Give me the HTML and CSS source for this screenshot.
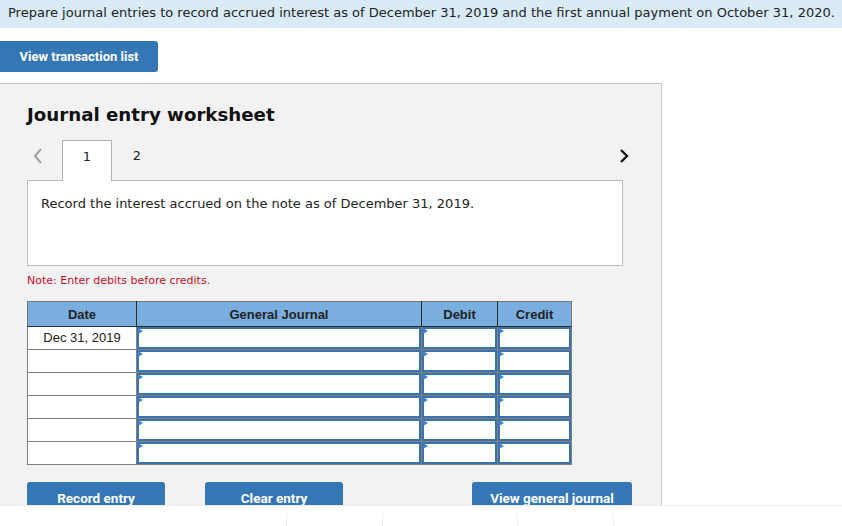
FILE: index.html
```html
<!DOCTYPE html>
<html lang="en">
<head>
    <meta charset="UTF-8">
    <title>Journal entry worksheet</title>
    <link rel="stylesheet" href="styles.css">
</head>
<body>
    <div class="question">Prepare journal entries to record accrued interest as of December 31, 2019 and the first annual payment on October 31, 2020.</div>

    <div class="toolbar">
        <button class="btn btn-top">View transaction list</button>
    </div>

    <div class="worksheet">
        <h2 class="ws-title">Journal entry worksheet</h2>

        <div class="tabs">
            <span class="arrow arrow-prev">
                <svg width="10" height="16" viewBox="0 0 10 16"><polyline points="8,1 2,8 8,15" fill="none" stroke="#a0a0a0" stroke-width="2"/></svg>
            </span>
            <div class="tab active">1</div>
            <div class="tab">2</div>
            <span class="arrow arrow-next">
                <svg width="10" height="16" viewBox="0 0 10 16"><polyline points="2,2 8,8 2,14" fill="none" stroke="#1a1a1a" stroke-width="2.4"/></svg>
            </span>
        </div>

        <div class="task">Record the interest accrued on the note as of December 31, 2019.</div>

        <p class="note">Note: Enter debits before credits.</p>

        <table class="journal">
            <thead>
                <tr>
                    <th class="col-date">Date</th>
                    <th class="col-gj">General Journal</th>
                    <th class="col-amt">Debit</th>
                    <th class="col-amt2">Credit</th>
                </tr>
            </thead>
            <tbody>
                <tr>
                    <td class="date">Dec 31, 2019</td>
                    <td><div class="field"></div></td>
                    <td><div class="field"></div></td>
                    <td><div class="field"></div></td>
                </tr>
                <tr>
                    <td class="date"></td>
                    <td><div class="field"></div></td>
                    <td><div class="field"></div></td>
                    <td><div class="field"></div></td>
                </tr>
                <tr>
                    <td class="date"></td>
                    <td><div class="field"></div></td>
                    <td><div class="field"></div></td>
                    <td><div class="field"></div></td>
                </tr>
                <tr>
                    <td class="date"></td>
                    <td><div class="field"></div></td>
                    <td><div class="field"></div></td>
                    <td><div class="field"></div></td>
                </tr>
                <tr>
                    <td class="date"></td>
                    <td><div class="field"></div></td>
                    <td><div class="field"></div></td>
                    <td><div class="field"></div></td>
                </tr>
                <tr>
                    <td class="date"></td>
                    <td><div class="field"></div></td>
                    <td><div class="field"></div></td>
                    <td><div class="field"></div></td>
                </tr>
            </tbody>
        </table>

        <div class="actions">
            <button class="btn btn-record">Record entry</button>
            <button class="btn btn-clear">Clear entry</button>
            <button class="btn btn-view">View general journal</button>
        </div>
    </div>

    <div class="footer">
        <span class="footer-cell c1"></span>
        <span class="footer-cell c2"></span>
        <span class="footer-cell c3"></span>
        <span class="footer-cell c4"></span>
    </div>
</body>
</html>
```

FILE: styles.css
```css
body {
    margin: 0;
    background: #fff;
    color: #222;
    font-family: "DejaVu Sans", Verdana, sans-serif;
    overflow: hidden;
}
.question {
    background-color: #d9ebf7;
    height: 28px;
    line-height: 26px;
    padding-left: 8px;
    font-size: 13px;
    white-space: nowrap;
}
.toolbar {
    margin-top: 13px;
}
.btn {
    border: none;
    border-radius: 3px;
    background-color: #3577b5;
    color: #fff;
    font-family: Roboto, "Liberation Sans", sans-serif;
    font-weight: 700;
    font-size: 13px;
    cursor: pointer;
}
.btn-top {
    width: 158px;
    height: 31px;
    border-radius: 0 3px 3px 0;
}
.worksheet {
    box-sizing: border-box;
    margin-top: 11px;
    width: 662px;
    height: 422px;
    overflow: hidden;
    background-color: #f2f2f2;
    border-top: 1px solid #c6c6c6;
    border-right: 1px solid #c6c6c6;
    padding: 19px 0 0 27px;
}
.ws-title {
    margin: 0;
    font-size: 18.2px;
    line-height: 24px;
    font-weight: 700;
    color: #111;
}
.tabs {
    display: flex;
    align-items: stretch;
    width: 595px;
    height: 40px;
    margin-top: 13px;
}
.arrow {
    display: flex;
    align-items: center;
    padding-bottom: 8px;
}
.arrow-prev {
    margin-left: 6px;
    margin-right: 19px;
}
.arrow-next {
    margin-left: auto;
    margin-right: -7px;
}
.tab {
    width: 50px;
    text-align: center;
    font-size: 13px;
    line-height: 31px;
    color: #222;
}
.tab.active {
    box-sizing: border-box;
    background-color: #fff;
    border: 1px solid #b3b3b3;
    border-bottom: none;
    height: 41px;
    margin-bottom: -1px;
    position: relative;
    z-index: 1;
}
.task {
    box-sizing: border-box;
    width: 596px;
    height: 86px;
    background-color: #fff;
    border: 1px solid #bcbcbc;
    padding: 14px 0 0 13px;
    font-size: 13px;
    line-height: 18px;
}
.note {
    margin: 8px 0 0;
    font-size: 11px;
    line-height: 14px;
    color: #c3112b;
}
.journal {
    margin-top: 13px;
    border-collapse: collapse;
    font-family: "Liberation Sans", Arial, sans-serif;
    font-size: 13px;
}
.journal th {
    height: 24px;
    padding: 0;
    background-color: #79aedf;
    border: 1px solid #2b2b2b;
    border-top-color: #777;
    font-weight: 700;
    color: #222;
}
.journal th:first-child {
    border-left-color: #777;
}
.journal th:last-child {
    border-right-color: #777;
}
.col-date { width: 108px; }
.col-gj { width: 284px; }
.col-amt { width: 75px; }
.col-amt2 { width: 73px; }
.journal td {
    height: 22px;
    padding: 0;
    border: 1px solid #808080;
    background-color: #fff;
}
.journal td.date {
    text-align: center;
    vertical-align: top;
    line-height: 21px;
    color: #222;
}
.field {
    position: relative;
    box-sizing: border-box;
    height: 22px;
    border: 2px solid #3b72aa;
}
.field::before {
    content: "";
    position: absolute;
    left: -1px;
    top: -1px;
    border-left: 5px solid #3d84cc;
    border-top: 3px solid transparent;
    border-bottom: 3px solid transparent;
}
.actions {
    display: flex;
    margin-top: 17px;
}
.actions .btn {
    height: 31px;
    font-size: 13.5px;
}
.btn-record {
    width: 138px;
}
.btn-clear {
    width: 138px;
    margin-left: 40px;
}
.btn-view {
    width: 160px;
    margin-left: 129px;
}
.footer {
    position: relative;
    height: 21px;
    border-top: 1px solid #ededed;
}
.footer-cell {
    position: absolute;
    top: 8px;
    bottom: 0;
    border-left: 1px solid #eeeeee;
}
.c1 { left: 286px; }
.c2 { left: 382px; }
.c3 { left: 517px; }
.c4 { left: 613px; }
```
